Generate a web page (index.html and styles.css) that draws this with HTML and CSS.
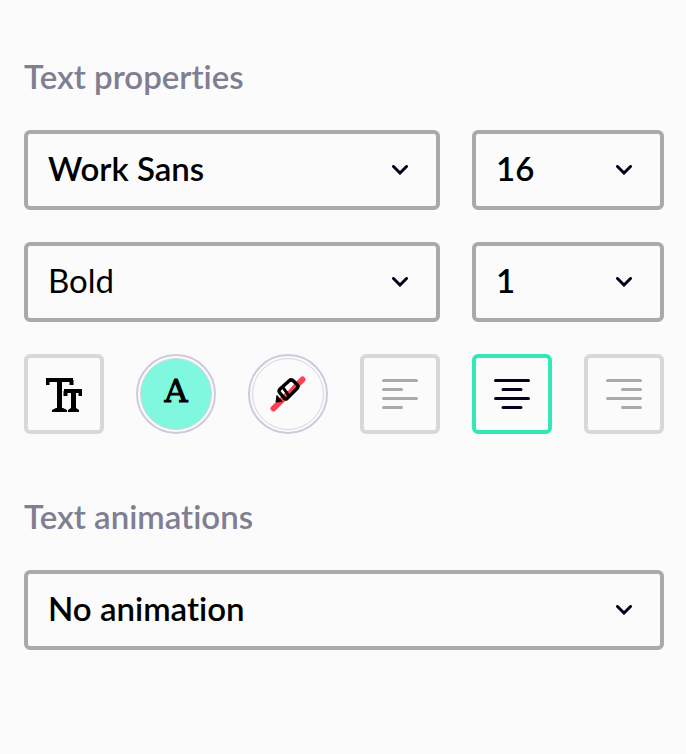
FILE: index.html
```html
<!DOCTYPE html>
<html lang="en">
<head>
<meta charset="utf-8">
<meta name="viewport" content="width=device-width, initial-scale=1">
<title>Text properties</title>
<link rel="stylesheet" href="styles.css">
</head>
<body>
<main class="panel">
  <section class="group" aria-labelledby="properties-title">
    <h2 class="title" id="properties-title">Text properties</h2>
    <div class="grid">
      <div class="field wide">
        <select class="select" aria-label="Font family"><option>Work Sans</option></select>
        <svg class="chevron" viewBox="0 0 16 10" aria-hidden="true"><path d="M1.500 1.500 8 8l6.500-6.500"/></svg>
      </div>
      <div class="field narrow">
        <select class="select" aria-label="Font size"><option>16</option></select>
        <svg class="chevron" viewBox="0 0 16 10" aria-hidden="true"><path d="M1.500 1.500 8 8l6.500-6.500"/></svg>
      </div>
      <div class="field wide">
        <select class="select regular" aria-label="Font weight"><option>Bold</option></select>
        <svg class="chevron" viewBox="0 0 16 10" aria-hidden="true"><path d="M1.500 1.500 8 8l6.500-6.500"/></svg>
      </div>
      <div class="field narrow">
        <select class="select" aria-label="Line height"><option>1</option></select>
        <svg class="chevron" viewBox="0 0 16 10" aria-hidden="true"><path d="M1.500 1.500 8 8l6.500-6.500"/></svg>
      </div>
    </div>
    <div class="tools">
      <button class="tool" type="button" aria-label="Text case">
        <svg class="icon" viewBox="0 0 36 36" aria-hidden="true">
          <g fill="none" stroke="#000">
            <path stroke-width="4" d="M0 4h27M1.500 4v5M25.500 4v5"/>
            <path stroke-width="5" d="M13.500 4v30"/>
            <path stroke-width="4" d="M18 15h18M19.500 15v5M34.500 15v5"/>
            <path stroke-width="5" d="M27.500 15v19"/>
          </g>
          <path d="M6 36v-2l4-2h7l4 2v2zM22 36v-2l3-2h5l3 2v2z"/>
        </svg>
      </button>
      <button class="tool round" type="button" aria-label="Text color"><span class="swatch mint">A</span></button>
      <button class="tool round" type="button" aria-label="Highlight color">
        <span class="swatch">
          <svg class="icon" viewBox="0 0 36 36" aria-hidden="true">
            <path d="M3.500 32.500 32.500 3.500" stroke="#ff4050" stroke-width="6" stroke-linecap="round"/>
            <path d="m14 12 7-7 3 3-6 7z" fill="#fff"/>
            <path d="M9.500 13.500 19.500 4.500q2-1.500 4 .5l3.500 3.500q2 2 0 4L17 22.500q-1.300 1-2.500 0L9.500 16.500q-1-1.500 0-3z" fill="none" stroke="#000" stroke-width="3.500" stroke-linejoin="round"/>
            <path d="m13 11.500 6 8.500" stroke="#000" stroke-width="3"/>
            <path d="M7 19.500 6 26l6-.5z" fill="#000" stroke="#000" stroke-linejoin="round"/>
          </svg>
        </span>
      </button>
      <button class="tool" type="button" aria-label="Align left" aria-pressed="false">
        <svg class="icon lines" viewBox="0 0 36 36" aria-hidden="true"><path d="M1.500 4.500h33M1.500 13.500h18M1.500 22.500h33M1.500 31.500h18"/></svg>
      </button>
      <button class="tool active" type="button" aria-label="Align center" aria-pressed="true">
        <svg class="icon lines" viewBox="0 0 36 36" aria-hidden="true"><path d="M1.500 4.500h33M9 13.500h18M1.500 22.500h33M9 31.500h18"/></svg>
      </button>
      <button class="tool" type="button" aria-label="Align right" aria-pressed="false">
        <svg class="icon lines" viewBox="0 0 36 36" aria-hidden="true"><path d="M1.500 4.500h33M16.500 13.500h18M1.500 22.500h33M16.500 31.500h18"/></svg>
      </button>
    </div>
  </section>
  <section class="group" aria-labelledby="animations-title">
    <h2 class="title" id="animations-title">Text animations</h2>
    <div class="field">
      <select class="select" aria-label="Animation"><option>No animation</option></select>
      <svg class="chevron" viewBox="0 0 16 10" aria-hidden="true"><path d="M1.500 1.500 8 8l6.500-6.500"/></svg>
    </div>
  </section>
</main>
</body>
</html>
```
FILE: styles.css
```css
* {
  box-sizing: border-box;
}

body {
  margin: 0;
  background: #fbfbfb;
  color: #000;
  font-family: Lato, "Liberation Sans", sans-serif;
}

.panel {
  display: flex;
  flex-direction: column;
  gap: 62px;
  padding: 56px 22px 56px 24px;
}

.title {
  margin: 0 0 34px;
  color: #807e92;
  font-size: 33px;
  font-weight: 600;
  font-variant-ligatures: none;
  line-height: 40px;
}

.grid {
  display: grid;
  grid-template-columns: repeat(6, 1fr);
  gap: 32px;
}

.wide {
  grid-column: span 4;
}

.narrow {
  grid-column: span 2;
}

.field {
  position: relative;
}

.select {
  display: block;
  width: 100%;
  height: 80px;
  padding: 0 64px 4px 20px;
  border: 4px solid #a9aaae;
  border-radius: 6px;
  background: transparent;
  color: inherit;
  font: 600 33px/40px Lato, "Liberation Sans", sans-serif;
  font-variant-ligatures: none;
  appearance: none;
}

.regular {
  font-weight: 400;
}

.chevron {
  position: absolute;
  top: 35px;
  right: 32px;
  width: 16px;
  height: 10px;
  fill: none;
  stroke: #03031f;
  stroke-width: 3;
  stroke-linecap: round;
  pointer-events: none;
}

.tools {
  display: grid;
  grid-template-columns: repeat(6, 1fr);
  gap: 32px;
  margin-top: 32px;
}

.tool {
  display: flex;
  align-items: center;
  justify-content: center;
  aspect-ratio: 1;
  padding: 0;
  border: 4px solid #d8d8d8;
  border-radius: 6px;
  background: transparent;
  color: #a9a9ae;
}

.active {
  border-color: #32e8b7;
  color: #03031f;
}

.round {
  padding: 2px;
  border: 2px solid #cccddc;
  border-radius: 50%;
}

.swatch {
  display: flex;
  align-items: center;
  justify-content: center;
  width: 100%;
  height: 100%;
  border: 1px solid #d5d5e3;
  border-radius: 50%;
  color: #000;
  font: 32px/40px "DejaVu Serif", serif;
}

.mint {
  padding-bottom: 6px;
  background: #80f7df;
  -webkit-text-stroke: 1px #000;
}

.icon {
  width: 36px;
  height: 36px;
}

.lines {
  fill: none;
  stroke: currentColor;
  stroke-width: 3;
  stroke-linecap: round;
}
```
